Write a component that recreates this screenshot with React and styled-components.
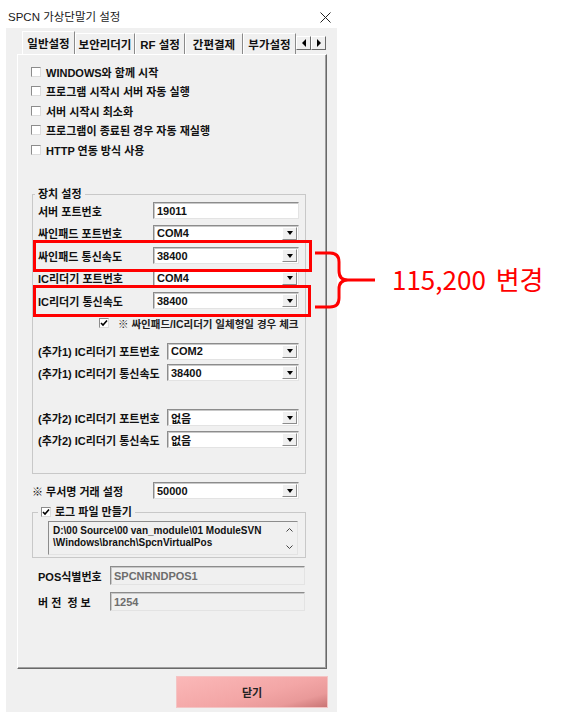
import React from 'react';
import styled, { createGlobalStyle } from 'styled-components';

const GlobalStyle = createGlobalStyle`
  html, body { margin: 0; padding: 0; background: #fff; }
  body { font-family: "Liberation Sans", "Noto Sans CJK KR", sans-serif; color: #111; }
`;

const Page = styled.div`
  position: relative;
  width: 567px;
  height: 719px;
  overflow: hidden;
  background: #fff;
`;

const Window = styled.div`
  width: 337px;
  height: 712px;
  display: flex;
  flex-direction: column;
`;

const TitleBar = styled.div`
  height: 28px;
  box-sizing: border-box;
  padding: 6px 6px 0 8px;
  display: flex;
  align-items: flex-start;
  justify-content: space-between;
  font-size: 11.5px;
  line-height: 22px;
  color: #1a1a1a;
`;

const CloseIcon = styled.svg`
  width: 11px;
  height: 11px;
  margin-top: 6px;
`;

const Body = styled.div`
  flex: 1;
  margin-left: 6px;
  background: #f0f0f0;
  display: flex;
  flex-direction: column;
`;

const TabStrip = styled.div`
  display: flex;
  align-items: flex-end;
  height: 23px;
  margin: 3px 0 0 16px;
`;

const Tab = styled.div`
  width: ${p => p.$w}px;
  height: ${p => (p.$active ? 23 : 21)}px;
  box-sizing: border-box;
  display: flex;
  align-items: center;
  justify-content: center;
  font-size: 11.5px;
  font-weight: 700;
  white-space: nowrap;
  overflow: hidden;
  border-top: 1px solid #fff;
  border-left: 1px solid #fff;
  border-right: 1px solid #8a8a8a;
  background: #f0f0f0;
`;

const TabArrows = styled.div`
  display: flex;
  align-self: flex-start;
  margin-top: 5px;
`;

const ArrowBtn = styled.div`
  width: 15px;
  height: 14px;
  box-sizing: border-box;
  border: 1px solid #fff;
  border-right-color: #696969;
  border-bottom-color: #696969;
  display: flex;
  align-items: center;
  justify-content: center;
  &::after {
    content: '';
    border-top: 4px solid transparent;
    border-bottom: 4px solid transparent;
    ${p => (p.$dir === 'left' ? 'border-right: 4px solid #000;' : 'border-left: 4px solid #000;')}
  }
`;

const Panel = styled.div`
  margin-left: 11px;
  width: 310px;
  height: 615px;
  box-sizing: border-box;
  border-left: 1px solid #fff;
  border-top: 1px solid #fff;
  border-right: 1px solid #696969;
  border-bottom: 1px solid #696969;
  box-shadow: inset -1px -1px #a0a0a0;
  display: flex;
  flex-direction: column;
  padding: 7px 0 0 13px;
`;

const CheckRow = styled.div`
  display: flex;
  align-items: center;
  gap: 5px;
  height: 19.5px;
  font-size: 11px;
  font-weight: 700;
  white-space: nowrap;
`;

const Box = styled.span`
  width: 10px;
  height: 10px;
  flex: none;
  box-sizing: border-box;
  background: #fff;
  border-top: 1px solid #8c8c8c;
  border-left: 1px solid #8c8c8c;
  border-right: 1px solid #dcdcdc;
  border-bottom: 1px solid #dcdcdc;
  display: flex;
  align-items: center;
  justify-content: center;
`;

const Group = styled.fieldset`
  margin: ${p => p.$mt}px 0 0 1px;
  width: 274px;
  box-sizing: border-box;
  border: 1px solid #c8c8c8;
  padding: ${p => p.$pad};
  min-inline-size: 0;
`;

const Legend = styled.legend`
  margin-left: ${p => p.$ml}px;
  padding: 0 3px;
  height: 14px;
  line-height: 14px;
  font-size: 11px;
  font-weight: 700;
  display: flex;
  align-items: center;
  gap: 4px;
`;

const Row = styled.div`
  display: flex;
  align-items: center;
  height: ${p => p.$h || 17}px;
  margin: ${p => p.$mt || 0}px 0 0 ${p => p.$ml || 0}px;
  font-size: 11px;
  font-weight: 700;
  white-space: nowrap;
`;

const Label = styled.span`
  width: ${p => p.$w}px;
  flex: none;
  white-space: pre;
`;

const Field = styled.div`
  width: ${p => p.$w}px;
  height: 100%;
  box-sizing: border-box;
  background: ${p => (p.$disabled ? '#f0f0f0' : '#fff')};
  color: ${p => (p.$disabled ? '#6d6d6d' : '#111')};
  border-top: 1px solid #8c8c8c;
  border-left: 1px solid #8c8c8c;
  border-right: 1px solid #e3e3e3;
  border-bottom: 1px solid #e3e3e3;
  box-shadow: inset 1px 1px #c8c8c8;
  display: flex;
  align-items: center;
  padding: 0 1px 0 3px;
  font-size: 11px;
  font-weight: 700;
`;

const Value = styled.span`
  flex: 1;
`;

const DropBtn = styled.span`
  width: 15px;
  height: 13px;
  box-sizing: border-box;
  background: #f0f0f0;
  border: 1px solid #fff;
  border-right-color: #8c8c8c;
  border-bottom-color: #8c8c8c;
  display: flex;
  align-items: center;
  justify-content: center;
  &::after {
    content: '';
    border-left: 3px solid transparent;
    border-right: 3px solid transparent;
    border-top: 4px solid #000;
  }
`;

const Note = styled.div`
  display: flex;
  align-items: center;
  gap: 9px;
  height: 13px;
  margin: 7.5px 0 0 61px;
  font-size: 10.5px;
  font-weight: 700;
  color: #222;
  white-space: nowrap;
`;

const LogBox = styled.div`
  height: 34px;
  box-sizing: border-box;
  border-top: 1px solid #8c8c8c;
  border-left: 1px solid #8c8c8c;
  border-right: 1px solid #e3e3e3;
  border-bottom: 1px solid #e3e3e3;
  display: flex;
  padding: 3px 2px 0 4px;
  font-size: 10px;
  font-weight: 700;
  line-height: 12px;
`;

const LogText = styled.div`
  flex: 1;
  white-space: pre;
`;

const ScrollCol = styled.div`
  width: 12px;
  display: flex;
  flex-direction: column;
  justify-content: space-between;
  align-items: center;
  padding: 3px 0 5px;
`;

const ButtonRow = styled.div`
  display: flex;
  justify-content: flex-end;
  padding-right: 9px;
  margin-top: 7px;
`;

const CloseButton = styled.button`
  width: 152px;
  height: 32px;
  border: 1px solid #f4c4c4;
  background: linear-gradient(165deg, #fbb8b8 0%, #f3a6a6 55%, #e99999 80%, #c97575 100%);
  font-family: "Noto Sans CJK KR", sans-serif;
  font-size: 11px;
  font-weight: 700;
  color: #222;
  padding: 0;
`;

const RedBox = styled.div`
  position: absolute;
  left: ${p => p.$x}px;
  top: ${p => p.$y}px;
  width: ${p => p.$w}px;
  height: ${p => p.$h}px;
  box-sizing: border-box;
  border: 3px solid #ff0000;
`;

const Brace = styled.svg`
  position: absolute;
  left: 312px;
  top: 248px;
  width: 66px;
  height: 64px;
`;

const Callout = styled.div`
  position: absolute;
  left: 392px;
  top: 262px;
  font-family: "Noto Sans CJK KR", sans-serif;
  font-size: 26px;
  line-height: 34px;
  color: #ff0000;
  white-space: nowrap;
  word-spacing: 4px;
`;

function Check({ checked }) {
  return (
    <Box>
      {checked && (
        <svg width="8" height="8" viewBox="0 0 8 8">
          <path d="M1 4 L3 6 L7 1.5" fill="none" stroke="#000" strokeWidth="1.6" />
        </svg>
      )}
    </Box>
  );
}

function Chevron({ up }) {
  return (
    <svg width="7" height="4" viewBox="0 0 7 4">
      <path d={up ? 'M0.5 3.5 L3.5 0.5 L6.5 3.5' : 'M0.5 0.5 L3.5 3.5 L6.5 0.5'} fill="none" stroke="#444" strokeWidth="1" />
    </svg>
  );
}

function Combo({ w, value }) {
  return (
    <Field $w={w}>
      <Value>{value}</Value>
      <DropBtn />
    </Field>
  );
}

const options = [
  'WINDOWS와 함께 시작',
  '프로그램 시작시 서버 자동 실행',
  '서버 시작시 최소화',
  '프로그램이 종료된 경우 자동 재실행',
  'HTTP 연동 방식 사용',
];

const tabs = [
  { name: '일반설정', w: 53, active: true },
  { name: '보안리더기', w: 60 },
  { name: 'RF 설정', w: 50 },
  { name: '간편결제', w: 58 },
  { name: '부가설정', w: 53 },
];

export default function App() {
  return (
    <Page>
      <GlobalStyle />
      <Window>
        <TitleBar>
          <span>SPCN 가상단말기 설정</span>
          <CloseIcon viewBox="0 0 11 11">
            <path d="M0.5 0.5 L10.5 10.5 M10.5 0.5 L0.5 10.5" stroke="#222" strokeWidth="1" />
          </CloseIcon>
        </TitleBar>
        <Body>
          <TabStrip>
            {tabs.map(t => (
              <Tab key={t.name} $w={t.w} $active={t.active}>{t.name}</Tab>
            ))}
            <TabArrows>
              <ArrowBtn $dir="left" />
              <ArrowBtn $dir="right" />
            </TabArrows>
          </TabStrip>
          <Panel>
            {options.map(o => (
              <CheckRow key={o}>
                <Check />
                {o}
              </CheckRow>
            ))}

            <Group $mt={27.5} $pad="1px 6px 25px 5px">
              <Legend $ml={-3}>장치 설정</Legend>
              <Row>
                <Label $w={115}>서버 포트번호</Label>
                <Field $w={146}>19011</Field>
              </Row>
              <Row $mt={5.5}>
                <Label $w={115}>싸인패드 포트번호</Label>
                <Combo w={146} value="COM4" />
              </Row>
              <Row $mt={5.5}>
                <Label $w={115}>싸인패드 통신속도</Label>
                <Combo w={146} value="38400" />
              </Row>
              <Row $mt={5.5}>
                <Label $w={115}>IC리더기 포트번호</Label>
                <Combo w={146} value="COM4" />
              </Row>
              <Row $mt={5.5}>
                <Label $w={115}>IC리더기 통신속도</Label>
                <Combo w={146} value="38400" />
              </Row>
              <Note>
                <Check checked />
                <span>※ 싸인패드/IC리더기 일체형일 경우 체크</span>
              </Note>
              <Row $mt={13}>
                <Label $w={129}>(추가1) IC리더기 포트번호</Label>
                <Combo w={132} value="COM2" />
              </Row>
              <Row $mt={4.5}>
                <Label $w={129}>(추가1) IC리더기 통신속도</Label>
                <Combo w={132} value="38400" />
              </Row>
              <Row $mt={28}>
                <Label $w={129}>(추가2) IC리더기 포트번호</Label>
                <Combo w={132} value="없음" />
              </Row>
              <Row $mt={5}>
                <Label $w={129}>(추가2) IC리더기 통신속도</Label>
                <Combo w={132} value="없음" />
              </Row>
            </Group>

            <Row $mt={8} $ml={1}>
              <Label $w={121}>※ 무서명 거래 설정</Label>
              <Combo w={146} value="50000" />
            </Row>

            <Group $mt={6} $pad="2px 7px 2px 15px">
              <Legend $ml={-10}>
                <Check checked />
                로그 파일 만들기
              </Legend>
              <LogBox>
                <LogText>{'D:\\00 Source\\00 van_module\\01 ModuleSVN\n\\Windows\\branch\\SpcnVirtualPos'}</LogText>
                <ScrollCol>
                  <Chevron up />
                  <Chevron />
                </ScrollCol>
              </LogBox>
            </Group>

            <Row $h={19} $mt={8} $ml={7}>
              <Label $w={72}>POS식별번호</Label>
              <Field $w={195} $disabled>SPCNRNDPOS1</Field>
            </Row>
            <Row $h={19} $mt={7} $ml={7}>
              <Label $w={72}>{'버 전  정 보'}</Label>
              <Field $w={195} $disabled>1254</Field>
            </Row>
          </Panel>
          <ButtonRow>
            <CloseButton>닫기</CloseButton>
          </ButtonRow>
        </Body>
      </Window>

      <RedBox $x={33} $y={240} $w={279} $h={32} />
      <RedBox $x={33} $y={285} $w={278} $h={32} />
      <Brace viewBox="0 0 66 64">
        <path
          d="M3 5 H18 Q27 5 27 14 V23 Q27 32 36 32 H63 M36 32 Q27 32 27 41 V50 Q27 59 18 59 H3"
          fill="none"
          stroke="#ff0000"
          strokeWidth="3"
        />
      </Brace>
      <Callout>115,200 변경</Callout>
    </Page>
  );
}
